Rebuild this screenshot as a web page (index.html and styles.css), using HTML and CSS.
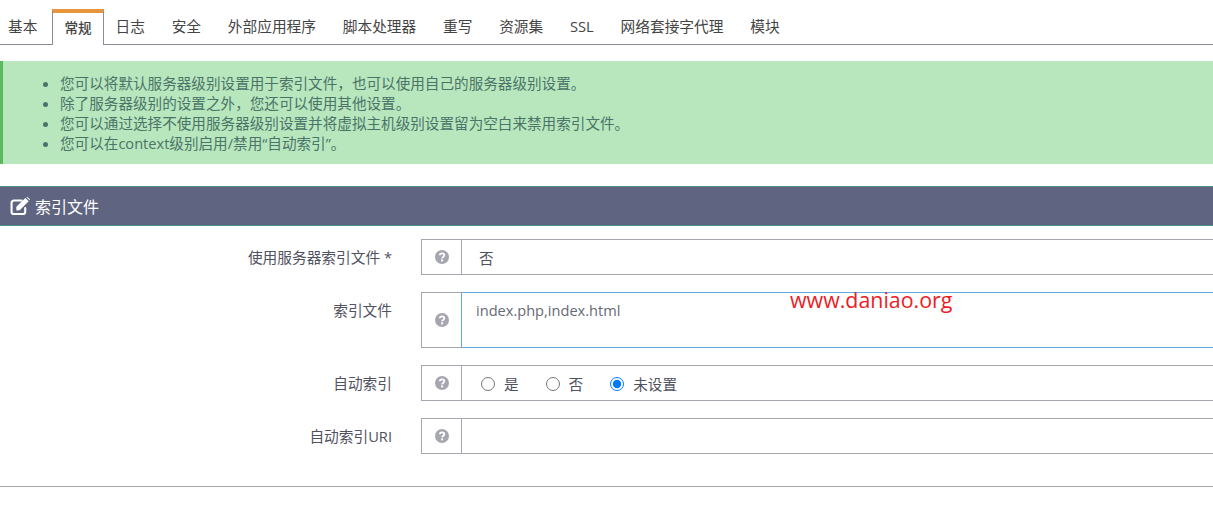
FILE: index.html
```
<!DOCTYPE html>
<html lang="zh">
<head>
<meta charset="utf-8">
<title>索引文件</title>
<link rel="stylesheet" href="styles.css">
</head>
<body>
<nav class="tabs">
  <a class="tab tab-first">基本</a>
  <a class="tab tab-active">常规</a>
  <a class="tab">日志</a>
  <a class="tab">安全</a>
  <a class="tab">外部应用程序</a>
  <a class="tab">脚本处理器</a>
  <a class="tab">重写</a>
  <a class="tab">资源集</a>
  <a class="tab">SSL</a>
  <a class="tab">网络套接字代理</a>
  <a class="tab">模块</a>
</nav>
<ul class="alert">
  <li>您可以将默认服务器级别设置用于索引文件，也可以使用自己的服务器级别设置。</li>
  <li>除了服务器级别的设置之外，您还可以使用其他设置。</li>
  <li>您可以通过选择不使用服务器级别设置并将虚拟主机级别设置留为空白来禁用索引文件。</li>
  <li>您可以在context级别启用/禁用“自动索引”。</li>
</ul>
<header class="section-head">
  <svg class="edit-icon" viewBox="0 0 20 18" width="21" height="19" aria-hidden="true">
    <path d="M14.5 10.5V14a2.2 2.2 0 0 1-2.2 2.2H3.7A2.2 2.2 0 0 1 1.5 14V5.5a2.2 2.2 0 0 1 2.2-2.2H11" fill="none" stroke="#fff" stroke-width="2" stroke-linecap="round"/>
    <path d="M6 9.2 14.6 0.8 17.8 4 9.2 12.5 6 12.7Z" fill="#fff"/>
    <path d="M15.6 0.2 16.3 -0.3 19 2.2 18.6 3Z" fill="#fff"/>
  </svg>
  <span>索引文件</span>
</header>
<main class="form">
  <div class="row">
    <label class="label">使用服务器索引文件 *</label>
    <div class="group">
      <span class="help"><svg class="q" viewBox="0 0 14 14" width="14" height="14"><use href="#q"/></svg></span>
      <div class="value value-static">否</div>
    </div>
  </div>
  <div class="row">
    <label class="label">索引文件</label>
    <div class="group group-tall">
      <span class="help"><svg class="q" viewBox="0 0 14 14" width="14" height="14"><use href="#q"/></svg></span>
      <div class="value value-area">index.php,index.html</div>
    </div>
  </div>
  <div class="row">
    <label class="label">自动索引</label>
    <div class="group">
      <span class="help"><svg class="q" viewBox="0 0 14 14" width="14" height="14"><use href="#q"/></svg></span>
      <div class="value value-radios">
        <label class="radio"><input type="radio" name="auto">是</label>
        <label class="radio"><input type="radio" name="auto">否</label>
        <label class="radio"><input type="radio" name="auto" checked>未设置</label>
      </div>
    </div>
  </div>
  <div class="row">
    <label class="label">自动索引URI</label>
    <div class="group">
      <span class="help"><svg class="q" viewBox="0 0 14 14" width="14" height="14"><use href="#q"/></svg></span>
      <div class="value"></div>
    </div>
  </div>
</main>
<hr class="rule">
<div class="watermark">www.daniao.org</div>
<svg class="defs" width="0" height="0" aria-hidden="true">
  <symbol id="q" viewBox="0 0 14 14">
    <circle cx="7" cy="7" r="7" fill="#a6a6b0"/>
    <path d="M4.8 5.3C4.9 4.1 5.9 3.4 7 3.4 8.3 3.4 9.3 4.2 9.3 5.3 9.3 6.9 7.2 7 7.1 8.4" fill="none" stroke="#fff" stroke-width="1.8"/>
    <rect x="6.1" y="9.4" width="2" height="2" fill="#fff"/>
  </symbol>
</svg>
</body>
</html>
```
FILE: styles.css
```
* { box-sizing: border-box; }
html, body { margin: 0; padding: 0; }
body {
  width: 1213px;
  height: 515px;
  overflow: hidden;
  position: relative;
  background: #fff;
  color: #50525f;
  font-family: "Open Sans", "Noto Sans CJK SC", sans-serif;
  font-size: 14.6px;
}
.tabs {
  display: flex;
  height: 45px;
  padding-top: 9px;
  border-bottom: 1px solid #8a8c9a;
}
.tab {
  padding: 7px 13.4px 0;
  font-size: 14.7px;
  line-height: 20px;
  color: #444;
  white-space: nowrap;
}
.tab-first { padding-left: 8px; padding-right: 14.6px; }
.tab-active {
  width: 52px;
  height: 36px;
  padding: 2px 0 0;
  margin-right: -1.9px;
  background: #fff;
  border: 1px solid #8a8c9a;
  border-top: 4px solid #e8963e;
  border-bottom: 0;
  font-weight: 500;
  font-size: 13.6px;
  line-height: 26px;
  text-align: center;
}
.alert {
  margin: 16px 0 22px;
  height: 103px;
  padding: 12px 0 0 57px;
  list-style: disc;
  background: #b8e6bd;
  border-left: 3px solid #5cb85c;
  color: #4a7468;
  line-height: 20px;
}
.section-head {
  display: flex;
  align-items: center;
  gap: 4px;
  height: 40px;
  padding: 0 0 0 10px;
  background: #5f6580;
  border-top: 1px solid #4f8f8a;
  border-bottom: 1px solid #4f8f8a;
  color: #fff;
  font-size: 16px;
}
.edit-icon { flex: none; overflow: visible; }
.form {
  display: flex;
  flex-direction: column;
  gap: 17px;
  padding-top: 13px;
}
.row {
  display: flex;
  align-items: flex-start;
}
.label {
  flex: none;
  width: 392px;
  padding-top: 8px;
  text-align: right;
  line-height: 20px;
  font-size: 14.7px;
}
.group {
  flex: none;
  display: flex;
  width: 792px;
  height: 36px;
  margin-left: 29px;
  border: 1px solid #a6a6b0;
  border-right: 0;
}
.group-tall { height: 56px; }
.help {
  flex: none;
  display: flex;
  align-items: center;
  justify-content: center;
  width: 40px;
  border-right: 1px solid #a6a6b0;
}
.q { display: block; }
.value { flex: 1; line-height: 20px; }
.value-static { padding: 8px 0 0 17px; }
.value-area {
  margin: -1px 0;
  padding: 7px 0 0 14px;
  border-top: 1px solid #5ea8e0;
  border-bottom: 1px solid #5ea8e0;
  color: #666a75;
}
.group-tall .help { border-right-color: #5ea8e0; }
.value-radios {
  display: flex;
  align-items: center;
  gap: 27px;
  padding: 2px 0 0 19px;
}
.radio { display: flex; align-items: center; gap: 9px; }
.radio input { margin: 0; width: 14px; height: 14px; accent-color: #007bff; }
.rule {
  margin: 32px 0 0;
  height: 0;
  border: 0;
  border-top: 1px solid #a6a6b0;
}
.watermark {
  position: absolute;
  left: 790px;
  top: 286px;
  color: #ee1c25;
  font-family: "Open Sans", sans-serif;
  font-size: 21.4px;
  line-height: 28px;
  white-space: nowrap;
}
.defs { position: absolute; }
```
